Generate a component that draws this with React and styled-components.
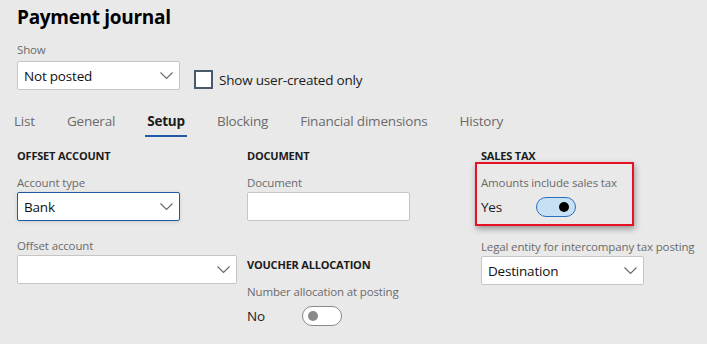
import React, { useState } from 'react';
import styled, { createGlobalStyle } from 'styled-components';

const GlobalStyle = createGlobalStyle`
  html, body {
    margin: 0;
    background: #e9e9e9;
    font-family: 'Segoe UI', 'Open Sans', 'Noto Sans', sans-serif;
    color: #1b1b1b;
  }
`;

const Page = styled.div`
  width: 707px;
  height: 344px;
  padding: 3px 0 0 17px;
  box-sizing: border-box;
  overflow: hidden;
`;

const Title = styled.h1`
  margin: 0;
  font-size: 19px;
  font-weight: 700;
  line-height: 28px;
  letter-spacing: -0.3px;
  color: #000;
`;

const FieldLabel = styled.div`
  font-size: 11.5px;
  letter-spacing: -0.15px;
  line-height: 16px;
  color: #6b6b6b;
  margin-bottom: ${({ gap }) => gap ?? 1}px;
`;

const FilterRow = styled.div`
  display: flex;
  align-items: flex-end;
  gap: 14px;
  margin-top: 11px;
`;

const Box = styled.div`
  width: ${({ width }) => width}px;
  height: 29px;
  box-sizing: border-box;
  background: #fff;
  border: 1px solid ${({ focused }) => (focused ? '#1e5aa0' : '#c6c6c6')};
  border-radius: 2px;
  display: flex;
  align-items: center;
  padding: 0 6px 0 6px;
  font-size: 13.5px;
  letter-spacing: -0.2px;
  color: #111;
  box-shadow: ${({ focused }) => (focused ? '0 1px 4px rgba(0,0,0,0.12)' : 'none')};
`;

const BoxText = styled.span`
  flex: 1;
`;

const Chevron = () => (
  <svg width="13" height="7" viewBox="0 0 13 7" fill="none">
    <path d="M0.5 0.5l6 6 6-6" stroke="#666" strokeWidth="1.1" />
  </svg>
);

const Check = styled.label`
  display: flex;
  align-items: center;
  gap: 6px;
  font-size: 13.5px;
  letter-spacing: -0.2px;
  color: #1b1b1b;
  margin-bottom: 1px;
`;

const CheckSquare = styled.span`
  width: 19px;
  height: 19px;
  box-sizing: border-box;
  border: 2px solid #475a6d;
  background: #fff;
`;

const Tabs = styled.div`
  display: flex;
  margin: 19px 0 0 -5px;
`;

const Tab = styled.div`
  position: relative;
  padding: 3px 2px 10px;
  margin-right: 28px;
  font-size: 13.5px;
  letter-spacing: -0.2px;
  font-weight: ${({ active }) => (active ? 700 : 400)};
  color: ${({ active }) => (active ? '#1b1b1b' : '#6b6b6b')};
  &::after {
    content: '';
    display: ${({ active }) => (active ? 'block' : 'none')};
    position: absolute;
    left: 0;
    right: 0;
    bottom: 3px;
    height: 2px;
    background: #1e5aa6;
  }
`;

const Columns = styled.div`
  display: grid;
  grid-template-columns: 230px 234px auto;
  margin-top: 8px;
`;

const Column = styled.div`
  display: flex;
  flex-direction: column;
`;

const SectionTitle = styled.div`
  font-size: 11px;
  font-weight: 700;
  line-height: 15px;
  letter-spacing: -0.2px;
  color: #1b1b1b;
  text-transform: uppercase;
  margin: ${({ top }) => top ?? 0}px 0 ${({ bottom }) => bottom ?? 12}px;
`;

const Field = styled.div`
  margin-bottom: ${({ bottom }) => bottom ?? 0}px;
`;

const ToggleRow = styled.div`
  display: flex;
  align-items: center;
  font-size: 13.5px;
  letter-spacing: -0.2px;
  color: #1b1b1b;
  height: 22px;
`;

const ToggleText = styled.span`
  width: 55px;
`;

const Track = styled.span`
  position: relative;
  width: 40px;
  height: 20px;
  box-sizing: border-box;
  border-radius: 10px;
  border: 1px solid ${({ on }) => (on ? '#2a6fbf' : '#8a8a8a')};
  background: ${({ on }) => (on ? '#c7e0f4' : '#fff')};
  &::after {
    content: '';
    position: absolute;
    top: 4px;
    left: ${({ on }) => (on ? '22px' : '5px')};
    width: 10px;
    height: 10px;
    border-radius: 50%;
    background: ${({ on }) => (on ? '#000' : '#8a8a8a')};
  }
`;

const Highlight = styled.div`
  margin: 0 0 13px -6px;
  width: 159px;
  height: 64px;
  box-sizing: border-box;
  border: 2px solid #e81123;
  padding: 11px 0 0 4px;
  box-shadow: 1px 3px 6px rgba(0, 0, 0, 0.35);
`;

const tabs = ['List', 'General', 'Setup', 'Blocking', 'Financial dimensions', 'History'];

export default function App() {
  const [userOnly] = useState(false);
  return (
    <>
      <GlobalStyle />
      <Page>
        <Title>Payment journal</Title>
        <FilterRow>
          <div>
            <FieldLabel gap={3}>Show</FieldLabel>
            <Box width={163}>
              <BoxText>Not posted</BoxText>
              <Chevron />
            </Box>
          </div>
          <Check>
            <CheckSquare aria-checked={userOnly} />
            Show user-created only
          </Check>
        </FilterRow>

        <Tabs>
          {tabs.map((t) => (
            <Tab key={t} active={t === 'Setup'}>
              {t}
            </Tab>
          ))}
        </Tabs>

        <Columns>
          <Column>
            <SectionTitle>Offset account</SectionTitle>
            <Field bottom={17}>
              <FieldLabel>Account type</FieldLabel>
              <Box width={163} focused>
                <BoxText>Bank</BoxText>
                <Chevron />
              </Box>
            </Field>
            <Field>
              <FieldLabel>Offset account</FieldLabel>
              <Box width={220}>
                <BoxText />
                <Chevron />
              </Box>
            </Field>
          </Column>

          <Column>
            <SectionTitle>Document</SectionTitle>
            <Field>
              <FieldLabel>Document</FieldLabel>
              <Box width={163} />
            </Field>
            <SectionTitle top={36}>Voucher allocation</SectionTitle>
            <FieldLabel gap={5}>Number allocation at posting</FieldLabel>
            <ToggleRow>
              <ToggleText>No</ToggleText>
              <Track />
            </ToggleRow>
          </Column>

          <Column>
            <SectionTitle bottom={-1}>Sales tax</SectionTitle>
            <Highlight>
              <FieldLabel gap={5}>Amounts include sales tax</FieldLabel>
              <ToggleRow>
                <ToggleText>Yes</ToggleText>
                <Track on />
              </ToggleRow>
            </Highlight>
            <FieldLabel>Legal entity for intercompany tax posting</FieldLabel>
            <Box width={163}>
              <BoxText>Destination</BoxText>
              <Chevron />
            </Box>
          </Column>
        </Columns>
      </Page>
    </>
  );
}
